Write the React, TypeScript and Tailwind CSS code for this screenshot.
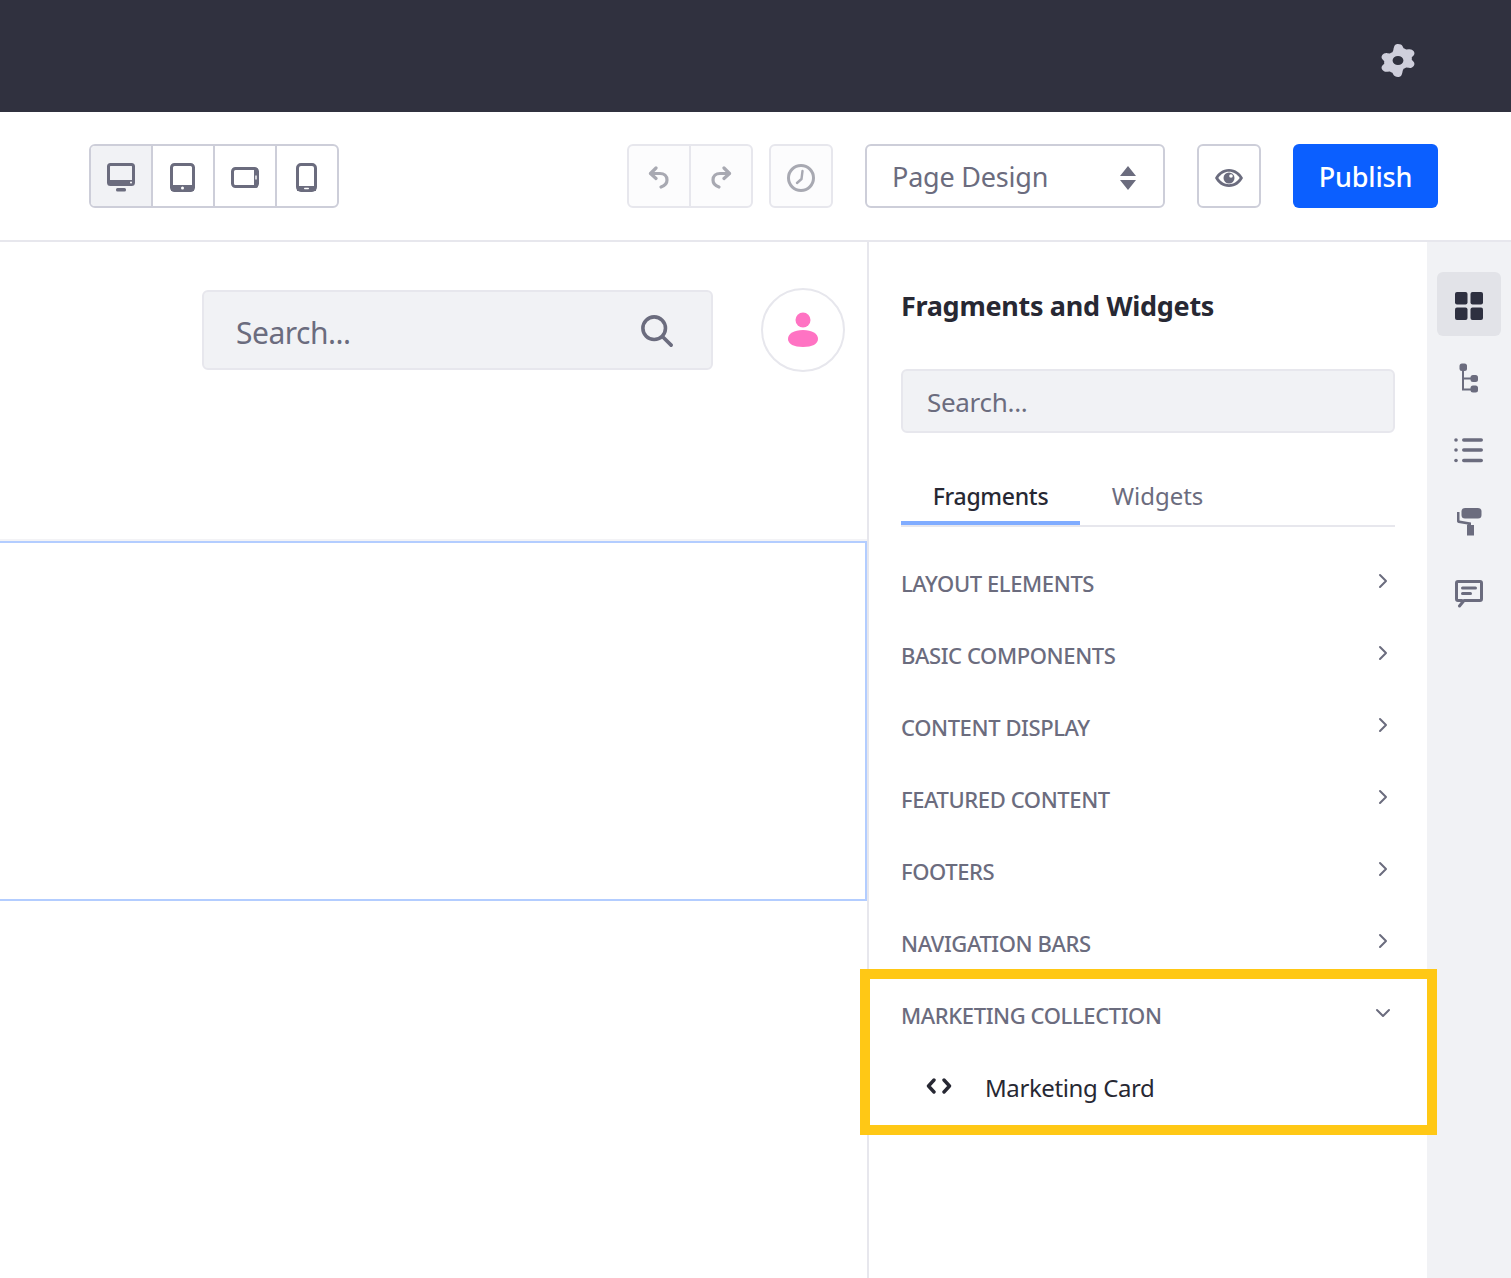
import { ChevronRight, ChevronDown } from 'lucide-react';

const sections = ['LAYOUT ELEMENTS', 'BASIC COMPONENTS', 'CONTENT DISPLAY', 'FEATURED CONTENT', 'FOOTERS', 'NAVIGATION BARS'];

function Gear() {
  return (
    <svg width="34" height="33" viewBox="2.600 1 18.800 22" preserveAspectRatio="none" fill="#cfcfdc">
      <path
        fillRule="evenodd"
        d="M12 1c1.2 0 2.2.5 2.6 1.6l.5 1.3c.5.2 1 .5 1.400.8l1.400-.2c1.200-.2 2.200.3 2.800 1.300.6 1 .5 2.100-.2 3l-.9 1.100c.1.500.1 1.100 0 1.600l.9 1.100c.7.900.8 2 .2 3-.6 1-1.600 1.500-2.800 1.300l-1.400-.2c-.4.300-.9.600-1.400.8l-.5 1.300C14.200 22.500 13.200 23 12 23s-2.200-.5-2.600-1.600l-.5-1.300c-.5-.2-1-.5-1.400-.8l-1.400.2c-1.200.2-2.200-.3-2.800-1.300-.6-1-.5-2.100.2-3l.9-1.100c-.1-.5-.1-1.100 0-1.600l-.9-1.100c-.7-.9-.8-2-.2-3 .6-1 1.600-1.500 2.800-1.300l1.400.2c.4-.3.9-.6 1.400-.8l.5-1.300C9.800 1.500 10.800 1 12 1zm0 8a3 3 0 1 0 0 6 3 3 0 0 0 0-6z"
      />
    </svg>
  );
}

function Desktop() {
  return (
    <svg width="28" height="30" viewBox="0 0 28 30" fill="none">
      <rect x="1.500" y="1.500" width="25" height="20" rx="2" stroke="#6b6c7e" strokeWidth="3" />
      <rect x="1" y="17" width="26" height="5" rx="1.500" fill="#6b6c7e" />
      <circle cx="24" cy="19.500" r="1" fill="#fff" />
      <rect x="9" y="25" width="10" height="3.500" rx="1.500" fill="#6b6c7e" />
    </svg>
  );
}

function Tablet() {
  return (
    <svg width="26" height="30" viewBox="0 0 26 30" fill="none">
      <rect x="1.500" y="1.500" width="22" height="26" rx="3" stroke="#6b6c7e" strokeWidth="3" />
      <rect x="1" y="22" width="23" height="6" fill="#6b6c7e" />
      <circle cx="12.500" cy="25" r="1.500" fill="#fff" />
    </svg>
  );
}

function TabletWide() {
  return (
    <svg width="28" height="22" viewBox="0 0 28 22" fill="none">
      <rect x="1.500" y="1.500" width="25" height="18" rx="3" stroke="#6b6c7e" strokeWidth="3" />
      <rect x="23" y="1" width="4" height="20" rx="2" fill="#6b6c7e" />
      <rect x="24.300" y="8.500" width="1.400" height="4" fill="#fff" />
    </svg>
  );
}

function Phone() {
  return (
    <svg width="22" height="30" viewBox="0 0 22 30" fill="none">
      <rect x="1.500" y="1.500" width="18" height="26" rx="3.500" stroke="#6b6c7e" strokeWidth="3" />
      <rect x="1" y="23" width="19" height="5" fill="#6b6c7e" />
      <rect x="8" y="24.800" width="5" height="1.500" rx=".7" fill="#fff" />
    </svg>
  );
}

function Undo({ flip }: { flip?: boolean }) {
  return (
    <svg width="22" height="24" viewBox="0 0 22 24" fill="none" className={flip ? '-scale-x-100' : ''}>
      <path d="M8 2 2.500 7.500 8 12.500" stroke="#a8a9b2" strokeWidth="3.200" strokeLinecap="round" strokeLinejoin="round" />
      <path d="M3 7.500h9c4 0 7 2.500 7 6.500s-3 6-6 7" stroke="#a8a9b2" strokeWidth="3.200" strokeLinecap="round" />
    </svg>
  );
}

function Clock() {
  return (
    <svg width="30" height="30" viewBox="0 0 30 30" fill="none">
      <circle cx="15" cy="15" r="12.500" stroke="#a8a9b2" strokeWidth="3" />
      <path d="M16.500 8 15.500 16 11 20" stroke="#a8a9b2" strokeWidth="2.400" strokeLinecap="round" strokeLinejoin="round" />
    </svg>
  );
}

function Eye() {
  return (
    <svg width="30" height="20" viewBox="0 0 30 20" fill="none">
      <path
        fillRule="evenodd"
        d="M15 1c6.500 0 11.500 4 14 9-2.500 5-7.500 9-14 9S3.500 15 1 10c2.500-5 7.500-9 14-9zm0 2.800C10.500 3.800 6.800 6.300 4.300 10c2.500 3.700 6.200 6.200 10.700 6.200s8.200-2.500 10.700-6.200C23.200 6.300 19.500 3.800 15 3.800z"
        fill="#6b6c7e"
      />
      <circle cx="15" cy="10" r="5.500" fill="#6b6c7e" />
      <circle cx="17" cy="8" r="1.800" fill="#fff" />
    </svg>
  );
}

function SearchIcon() {
  return (
    <svg width="32" height="32" viewBox="0 0 34 34" fill="none" className="mt-[2px]">
      <circle cx="14" cy="14" r="12" stroke="#6b6c7e" strokeWidth="3.800" />
      <path d="M23 23l9 9" stroke="#6b6c7e" strokeWidth="3.800" strokeLinecap="round" />
    </svg>
  );
}

function UserIcon() {
  return (
    <svg width="32" height="36" viewBox="0 0 32 36" fill="#ff73c3">
      <circle cx="16" cy="8" r="7.500" />
      <path d="M1 27c0-5.500 6-9 15-9s15 3.500 15 9c0 5-6 8-15 8S1 32 1 27z" />
    </svg>
  );
}

function Grid() {
  return (
    <svg width="28" height="28" viewBox="0 0 28 28" fill="#2e3040">
      <rect x="0" y="0" width="12.500" height="12.500" rx="2" />
      <rect x="15.500" y="0" width="12.500" height="12.500" rx="2" />
      <rect x="0" y="15.500" width="12.500" height="12.500" rx="2" />
      <rect x="15.500" y="15.500" width="12.500" height="12.500" rx="2" />
    </svg>
  );
}

function Tree() {
  return (
    <svg width="20" height="30" viewBox="0 0 20 30" fill="none">
      <path d="M4 6v20.500h9M4 15.500h9" stroke="#6b6c7e" strokeWidth="2" />
      <rect x="0.500" y="0.500" width="7.500" height="7.500" rx="2.500" fill="#6b6c7e" />
      <rect x="11.500" y="12" width="7.500" height="7" rx="2.500" fill="#6b6c7e" />
      <rect x="11.500" y="22.500" width="7.500" height="7" rx="2.500" fill="#6b6c7e" />
    </svg>
  );
}

function ListIcon() {
  return (
    <svg width="30" height="26" viewBox="0 0 30 26" fill="#6b6c7e">
      <circle cx="2" cy="3" r="1.800" />
      <circle cx="2" cy="13" r="1.800" />
      <circle cx="2" cy="23.500" r="1.800" />
      <rect x="8" y="1.200" width="21" height="3.600" rx="1.800" />
      <rect x="8" y="11.200" width="21" height="3.600" rx="1.800" />
      <rect x="8" y="21.700" width="21" height="3.600" rx="1.800" />
    </svg>
  );
}

function Roller() {
  return (
    <svg width="26" height="30" viewBox="0 0 26 30" fill="#6b6c7e">
      <rect x="5.500" y="1" width="20" height="10.500" rx="3.500" />
      <path d="M1 5h2.500v8.500L15 15.500v3H11.500v-1L2.500 16C1.500 15.800 1 15 1 14z" />
      <rect x="11" y="18" width="7" height="10.500" />
    </svg>
  );
}

function Comment() {
  return (
    <svg width="28" height="28" viewBox="0 0 28 28" fill="none">
      <path d="M3 1.500h22c.8 0 1.500.7 1.500 1.500v16c0 .8-.7 1.500-1.500 1.500H9L4.500 26M3 1.500c-.8 0-1.500.7-1.500 1.500v16c0 .8.700 1.500 1.500 1.500h4" stroke="#6b6c7e" strokeWidth="3" strokeLinecap="round" strokeLinejoin="round" />
      <rect x="6" y="6.500" width="16" height="3" rx="1.500" fill="#6b6c7e" />
      <rect x="6" y="12" width="11" height="3" rx="1.500" fill="#6b6c7e" />
    </svg>
  );
}

function CodeIcon() {
  return (
    <svg width="26" height="16" viewBox="0 0 26 16" fill="none" className="-mt-[4px]">
      <path d="M8 2 2.500 8 8 14M18 2l5.500 6-5.500 6" stroke="#272833" strokeWidth="3.400" strokeLinecap="round" strokeLinejoin="round" />
    </svg>
  );
}

export default function App() {
  return (
    <div className="flex h-[1278px] w-[1511px] flex-col overflow-hidden bg-white font-['Noto_Sans',sans-serif]">
      {/* Top bar */}
      <div className="flex h-[112px] shrink-0 items-center justify-end bg-[#30313f] pr-[96px] pt-2">
        <Gear />
      </div>

      {/* Toolbar */}
      <div className="flex h-[130px] shrink-0 items-center border-b-2 border-[#e7e7ed] pl-[89px] pr-[73px]">
        <div className="flex h-[64px] overflow-hidden rounded-[6px] border-2 border-[#cdced9]">
          <div className="flex w-[62px] items-center justify-center border-r-2 border-[#cdced9] bg-[#f1f2f5] pt-1">
            <Desktop />
          </div>
          <div className="flex w-[62px] items-center justify-center border-r-2 border-[#cdced9] pt-1">
            <Tablet />
          </div>
          <div className="flex w-[62px] items-center justify-center border-r-2 border-[#cdced9] pt-1">
            <TabletWide />
          </div>
          <div className="flex w-[60px] items-center justify-center pt-1">
            <Phone />
          </div>
        </div>

        <div className="ml-[288px] flex h-[64px] overflow-hidden rounded-[6px] border-2 border-[#e7e7ed] bg-[#fcfcfd]">
          <div className="flex w-[62px] items-center justify-center border-r-2 border-[#e7e7ed] pt-1">
            <Undo />
          </div>
          <div className="flex w-[60px] items-center justify-center pt-1">
            <Undo flip />
          </div>
        </div>
        <div className="ml-4 flex h-[64px] w-[64px] items-center justify-center rounded-[6px] border-2 border-[#e7e7ed] bg-[#fcfcfd] pt-1">
          <Clock />
        </div>

        <div className="ml-8 flex h-[64px] w-[300px] items-center justify-between rounded-[6px] border-2 border-[#cdced9] pl-[25px] pr-[26px] pt-[4px] text-[27px] tracking-[-0.2px] text-[#6b6c7e]">
          <span className="-mt-[2px]">Page Design</span>
          <svg width="18" height="26" viewBox="0 0 18 26" fill="#6b6c7e">
            <path d="M9 1l8 10H1zM1 15h16l-8 10z" />
          </svg>
        </div>
        <div className="ml-8 flex h-[64px] w-[64px] items-center justify-center rounded-[6px] border-2 border-[#cdced9] pt-1">
          <Eye />
        </div>
        <div className="ml-8 flex h-[64px] w-[145px] items-center justify-center rounded-[6px] bg-[#0b5fff] pt-[2px] text-[27px] font-medium tracking-[-0.2px] text-white">
          Publish
        </div>
      </div>

      {/* Body */}
      <div className="flex min-h-0 flex-1">
        <div className="w-[867px] shrink-0">
          <div className="flex items-center pl-[202px] pt-[46px]">
            <div className="flex h-[80px] w-[511px] items-center justify-between rounded-[6px] border-2 border-[#e7e7ed] bg-[#f1f2f5] pl-[32px] pr-[38px] text-[30px] tracking-[-0.5px] text-[#6b6c7e]">
              <span className="pt-[5px]">Search...</span>
              <SearchIcon />
            </div>
            <div className="ml-[48px] flex h-[84px] w-[84px] items-center justify-center rounded-full border-2 border-[#e7e7ed]">
              <UserIcon />
            </div>
          </div>
          <div className="mt-[169px] h-[360px] w-[867px] border-2 border-l-0 border-[#b3cdff] shadow-[0_-2px_0_#f3f3f6]" />
        </div>

        {/* Fragments panel */}
        <div className="relative w-[560px] shrink-0 border-l-2 border-[#e7e7ed] px-[32px]">
          <div className="pt-[43px] text-[27px] font-bold leading-[42px] tracking-[-0.3px] text-[#272833]">Fragments and Widgets</div>
          <div className="mt-[42px] flex h-[64px] items-center rounded-[6px] border-2 border-[#e7e7ed] bg-[#f1f2f5] pl-[24px] pt-[2px] text-[26px] tracking-[-0.3px] text-[#6b6c7e]">
            Search...
          </div>
          <div className="mt-[33px] flex h-[61px] border-b-2 border-[#e7e7ed]">
            <div className="flex w-[179px] items-center justify-center border-b-4 border-[#80acff] pt-[5px] text-[23px] font-medium tracking-[-0.3px] text-[#272833]">
              Fragments
            </div>
            <div className="flex w-[155px] items-center justify-center border-b-4 border-transparent pt-[5px] text-[24px] text-[#6b6c7e]">Widgets</div>
          </div>
          <div className="mt-[21px]">
            {sections.map((name) => (
              <div key={name} className="flex h-[72px] items-center justify-between text-[22px] font-medium tracking-[-0.4px] text-[#6b6c7e]">
                <span className="pb-[2px]">{name}</span>
                <ChevronRight size={24} strokeWidth={2} className="-mt-[6px] text-[#6b6c7e]" />
              </div>
            ))}
            <div className="flex h-[72px] items-center justify-between text-[22px] font-medium tracking-[-0.4px] text-[#6b6c7e]">
              <span className="pb-[2px]">MARKETING COLLECTION</span>
              <ChevronDown size={24} strokeWidth={2} className="-mt-[6px] text-[#6b6c7e]" />
            </div>
            <div className="flex h-[72px] items-center pl-[25px] text-[24px] tracking-[-0.4px] text-[#272833]">
              <CodeIcon />
              <span className="ml-[33px]">Marketing Card</span>
            </div>
          </div>
          {/* highlight overlay */}
          <div className="absolute left-[-9px] top-[727px] h-[166px] w-[577px] border-[10px] border-[#ffc815]" />
        </div>

        {/* Rail */}
        <div className="flex flex-1 flex-col items-center bg-[#f1f2f5] pt-[30px]">
          <div className="flex h-[64px] w-[64px] items-center justify-center rounded-[6px] bg-[#e2e3e8] pt-1">
            <Grid />
          </div>
          <div className="mt-[27px] flex h-[30px] items-center">
            <Tree />
          </div>
          <div className="mt-[44px] flex h-[26px] items-center">
            <ListIcon />
          </div>
          <div className="mt-[44px] flex h-[30px] items-center">
            <Roller />
          </div>
          <div className="mt-[42px] flex h-[30px] items-center">
            <Comment />
          </div>
        </div>
      </div>
    </div>
  );
}
